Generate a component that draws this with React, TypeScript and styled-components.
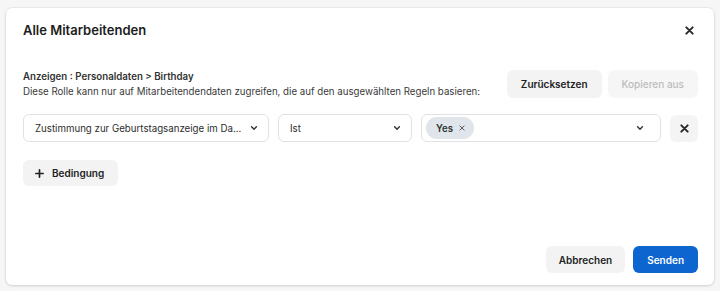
import React from 'react';
import { styled, createGlobalStyle } from 'styled-components';

const GlobalStyle = createGlobalStyle`
  html, body {
    margin: 0;
    padding: 0;
    background: #f6f6f6;
    font-family: Inter, "Noto Sans", sans-serif;
    color: #222;
  }
  * { box-sizing: border-box; }
`;

const ChevronIcon = () => (
  <svg width="8" height="8" viewBox="0 0 10 10" fill="none">
    <path d="M2 3.5L5 6.5L8 3.5" stroke="#333" strokeWidth="1.8" strokeLinecap="round" strokeLinejoin="round" />
  </svg>
);

const CrossIcon: React.FC<{ size?: number; weight?: number; color?: string }> = ({
  size = 9,
  weight = 2,
  color = '#2a2a2a',
}) => (
  <svg width={size} height={size} viewBox="0 0 10 10" fill="none">
    <path d="M1.5 1.5L8.5 8.5M8.5 1.5L1.5 8.5" stroke={color} strokeWidth={weight} strokeLinecap="round" />
  </svg>
);

const PlusIcon = () => (
  <svg width="9" height="9" viewBox="0 0 10 10" fill="none">
    <path d="M5 1V9M1 5H9" stroke="#222" strokeWidth="1.9" strokeLinecap="round" />
  </svg>
);

const App: React.FC = () => {
  return (
    <>
      <GlobalStyle />
      <Page>
        <Modal>
          <Header>
            <Title>Alle Mitarbeitenden</Title>
            <IconButton aria-label="Schließen">
              <CrossIcon size={9} weight={2.2} />
            </IconButton>
          </Header>

          <InfoRow>
            <InfoText>
              <Crumb>Anzeigen : Personaldaten &gt; Birthday</Crumb>
              <Hint>
                Diese Rolle kann nur auf Mitarbeitendendaten zugreifen, die auf den
                ausgewählten Regeln basieren:
              </Hint>
            </InfoText>
            <Actions>
              <Button>Zurücksetzen</Button>
              <Button disabled>Kopieren aus</Button>
            </Actions>
          </InfoRow>

          <RuleRow>
            <Select $width={246} $padRight={10}>
              <SelectValue>Zustimmung zur Geburtstagsanzeige im Da...</SelectValue>
              <ChevronIcon />
            </Select>
            <Select $width={134} $padRight={10}>
              <SelectValue>Ist</SelectValue>
              <ChevronIcon />
            </Select>
            <Select $grow $padLeft={4} $padRight={16}>
              <Chips>
                <Chip>
                  Yes
                  <CrossIcon size={6} weight={1.6} color="#555" />
                </Chip>
              </Chips>
              <ChevronIcon />
            </Select>
            <SquareButton aria-label="Regel entfernen">
              <CrossIcon size={9} weight={2.2} />
            </SquareButton>
          </RuleRow>

          <AddRow>
            <Button $icon>
              <PlusIcon />
              Bedingung
            </Button>
          </AddRow>

          <Footer>
            <FooterButton>Abbrechen</FooterButton>
            <PrimaryButton>Senden</PrimaryButton>
          </Footer>
        </Modal>
      </Page>
    </>
  );
};

const Page = styled.div`
  width: 720px;
  height: 291px;
  padding: 8px 6px 6px;
`;

const Modal = styled.div`
  width: 708px;
  height: 277px;
  background: #fff;
  border-radius: 6px;
  box-shadow: 0 1px 3px rgba(0, 0, 0, 0.12), 0 0 0 1px rgba(0, 0, 0, 0.04);
  padding: 12px 16px 12px 17px;
  display: flex;
  flex-direction: column;
`;

const Header = styled.div`
  display: flex;
  align-items: center;
  justify-content: space-between;
  height: 20px;
`;

const Title = styled.h2`
  margin: 0;
  font-size: 13px;
  font-weight: 600;
  color: #1c1c1c;
`;

const IconButton = styled.button`
  border: 0;
  background: none;
  padding: 0;
  margin-right: 4px;
  display: flex;
  cursor: pointer;
`;

const InfoRow = styled.div`
  margin-top: 29px;
  display: flex;
  align-items: center;
  justify-content: space-between;
`;

const InfoText = styled.div`
  display: flex;
  flex-direction: column;
  font-size: 9.7px;
  line-height: 15px;
`;

const Crumb = styled.span`
  font-weight: 600;
  color: #333;
`;

const Hint = styled.span`
  color: #3a3a3a;
`;

const Actions = styled.div`
  display: flex;
  gap: 6px;
`;

const Button = styled.button<{ $icon?: boolean }>`
  height: 28px;
  border: 0;
  border-radius: 6px;
  background: #f3f3f3;
  font-family: inherit;
  font-size: 10px;
  font-weight: 600;
  color: #222;
  padding: ${(p) => (p.$icon ? '0 14px 0 12px' : '0 14px')};
  display: inline-flex;
  align-items: center;
  gap: 8px;
  cursor: pointer;

  &:disabled {
    background: #f6f6f6;
    color: #bcbcbc;
    font-weight: 500;
  }
`;

const FooterButton = styled(Button)`
  height: 27px;
  padding: 0 13px;
`;

const PrimaryButton = styled(FooterButton)`
  background: #0d66d0;
  color: #fff;
  padding: 0 14px;
`;

const RuleRow = styled.div`
  margin-top: 15px;
  display: flex;
  align-items: center;
  gap: 9px;
`;

const Select = styled.div<{
  $width?: number;
  $grow?: boolean;
  $padLeft?: number;
  $padRight?: number;
}>`
  height: 28px;
  ${(p) => (p.$width ? `width: ${p.$width}px;` : '')}
  ${(p) => (p.$grow ? 'flex: 1;' : '')}
  border: 1px solid #e2e2e2;
  border-radius: 6px;
  background: #fff;
  padding: 0 ${(p) => p.$padRight ?? 11}px 0 ${(p) => p.$padLeft ?? 11}px;
  display: flex;
  align-items: center;
  justify-content: space-between;
  gap: 4px;
`;

const SelectValue = styled.span`
  font-size: 9.7px;
  color: #2c2c2c;
  white-space: nowrap;
  overflow: hidden;
  text-overflow: clip;
  min-width: 0;
`;

const Chips = styled.div`
  display: flex;
  gap: 4px;
`;

const Chip = styled.span`
  height: 22px;
  border-radius: 11px;
  background: #dfe5ea;
  padding: 0 9px 0 10px;
  display: inline-flex;
  align-items: center;
  gap: 6px;
  font-size: 9.7px;
  font-weight: 600;
  color: #333;
`;

const SquareButton = styled.button`
  width: 28px;
  height: 27px;
  border: 0;
  border-radius: 6px;
  background: #f4f4f4;
  display: flex;
  align-items: center;
  justify-content: center;
  padding: 0;
  cursor: pointer;
`;

const AddRow = styled.div`
  margin-top: 18px;
  display: flex;

  & > button {
    height: 26px;
  }
`;

const Footer = styled.div`
  margin-top: auto;
  display: flex;
  justify-content: flex-end;
  gap: 8px;
`;

export default App;
